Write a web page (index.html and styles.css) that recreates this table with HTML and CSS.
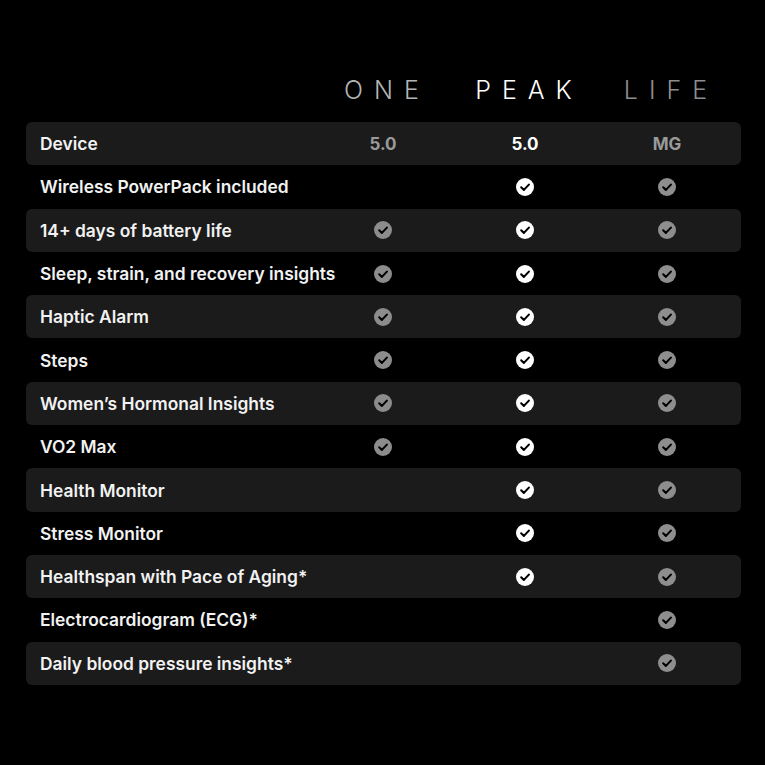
FILE: index.html
```html
<!DOCTYPE html>
<html>
<head>
<meta charset="utf-8">
<link rel="stylesheet" href="styles.css">
</head>
<body>
<svg width="0" height="0" class="defs">
  <defs>
    <symbol id="chk" viewBox="0 0 18 18">
      <circle cx="9" cy="9" r="9" fill="currentColor"/>
      <path d="M5.2 9.3 L7.9 11.9 L12.9 6.6" fill="none" stroke="#000" stroke-width="2.1" stroke-linecap="round" stroke-linejoin="round"/>
    </symbol>
  </defs>
</svg>
<div class="page">
  <div class="head">
    <div></div>
    <div class="tier one">ONE</div>
    <div class="tier peak">PEAK</div>
    <div class="tier life">LIFE</div>
  </div>
  <div class="table">
    <div class="row shade"><div class="label">Device</div><div class="val one">5.0</div><div class="val peak">5.0</div><div class="val life">MG</div></div>
    <div class="row"><div class="label">Wireless PowerPack included</div><div class="cell"></div><div class="cell peak"><svg class="ic"><use href="#chk"/></svg></div><div class="cell life"><svg class="ic"><use href="#chk"/></svg></div></div>
    <div class="row shade"><div class="label">14+ days of battery life</div><div class="cell one"><svg class="ic"><use href="#chk"/></svg></div><div class="cell peak"><svg class="ic"><use href="#chk"/></svg></div><div class="cell life"><svg class="ic"><use href="#chk"/></svg></div></div>
    <div class="row"><div class="label">Sleep, strain, and recovery insights</div><div class="cell one"><svg class="ic"><use href="#chk"/></svg></div><div class="cell peak"><svg class="ic"><use href="#chk"/></svg></div><div class="cell life"><svg class="ic"><use href="#chk"/></svg></div></div>
    <div class="row shade"><div class="label">Haptic Alarm</div><div class="cell one"><svg class="ic"><use href="#chk"/></svg></div><div class="cell peak"><svg class="ic"><use href="#chk"/></svg></div><div class="cell life"><svg class="ic"><use href="#chk"/></svg></div></div>
    <div class="row"><div class="label">Steps</div><div class="cell one"><svg class="ic"><use href="#chk"/></svg></div><div class="cell peak"><svg class="ic"><use href="#chk"/></svg></div><div class="cell life"><svg class="ic"><use href="#chk"/></svg></div></div>
    <div class="row shade"><div class="label">Women’s Hormonal Insights</div><div class="cell one"><svg class="ic"><use href="#chk"/></svg></div><div class="cell peak"><svg class="ic"><use href="#chk"/></svg></div><div class="cell life"><svg class="ic"><use href="#chk"/></svg></div></div>
    <div class="row"><div class="label">VO2 Max</div><div class="cell one"><svg class="ic"><use href="#chk"/></svg></div><div class="cell peak"><svg class="ic"><use href="#chk"/></svg></div><div class="cell life"><svg class="ic"><use href="#chk"/></svg></div></div>
    <div class="row shade"><div class="label">Health Monitor</div><div class="cell"></div><div class="cell peak"><svg class="ic"><use href="#chk"/></svg></div><div class="cell life"><svg class="ic"><use href="#chk"/></svg></div></div>
    <div class="row"><div class="label">Stress Monitor</div><div class="cell"></div><div class="cell peak"><svg class="ic"><use href="#chk"/></svg></div><div class="cell life"><svg class="ic"><use href="#chk"/></svg></div></div>
    <div class="row shade"><div class="label">Healthspan with Pace of Aging*</div><div class="cell"></div><div class="cell peak"><svg class="ic"><use href="#chk"/></svg></div><div class="cell life"><svg class="ic"><use href="#chk"/></svg></div></div>
    <div class="row"><div class="label">Electrocardiogram (ECG)*</div><div class="cell"></div><div class="cell"></div><div class="cell life"><svg class="ic"><use href="#chk"/></svg></div></div>
    <div class="row shade"><div class="label">Daily blood pressure insights*</div><div class="cell"></div><div class="cell"></div><div class="cell life"><svg class="ic"><use href="#chk"/></svg></div></div>
  </div>
</div>
</body>
</html>
```
FILE: styles.css
```css
html, body {
  margin: 0;
  padding: 0;
  background: #000;
}
.defs {
  position: absolute;
  width: 0;
  height: 0;
}
.page {
  width: 765px;
  height: 765px;
  box-sizing: border-box;
  padding: 76px 24px 0 26px;
  font-family: Inter, "Liberation Sans", sans-serif;
}
.head, .row {
  display: grid;
  grid-template-columns: minmax(0, 1fr) 142px 142px 142px;
  padding-right: 3px;
}
.head {
  height: 46px;
}
.tier {
  text-align: center;
  font-size: 25px;
  font-weight: 300;
  letter-spacing: 11px;
  text-indent: 8px;
  line-height: 28px;
}
.tier.one { color: #b4b4b4; }
.tier.peak { color: #ffffff; }
.tier.life { color: #8e8e8e; }
.row {
  height: 43.3px;
  align-items: center;
  border-radius: 6px;
}
.row.shade {
  background: #1b1b1b;
}
.label {
  padding-left: 14px;
  color: #f2f2f2;
  font-size: 17.4px;
  font-weight: 600;
  white-space: nowrap;
}
.val {
  text-align: center;
  font-size: 17px;
  font-weight: 700;
}
.val.one { color: #9a9a9a; }
.val.peak { color: #ffffff; }
.val.life { color: #9a9a9a; }
.cell {
  display: flex;
  justify-content: center;
  align-items: center;
}
.ic {
  width: 18px;
  height: 18px;
  display: block;
}
.cell.one .ic { color: #8c8c8c; }
.cell.peak .ic { color: #ffffff; }
.cell.life .ic { color: #8e8e8e; }
```
